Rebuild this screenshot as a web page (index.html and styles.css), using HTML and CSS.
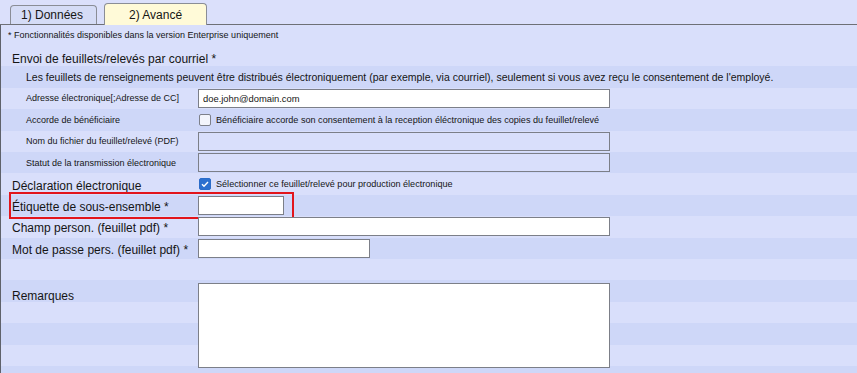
FILE: index.html
```html
<!DOCTYPE html>
<html>
<head>
    <meta name="viewport" content="width=device-width, initial-scale=1">
    <link rel="stylesheet" href="styles.css">
</head>
<body>

<div class="tabs">
    <div class="tab">1) Données</div>
    <div class="tab active">2) Avancé</div>
</div>

<div class="panel">
    <div class="note">* Fonctionnalités disponibles dans la version Enterprise uniquement</div>

    <form class="form">
        <div class="row">
            <span class="heading">Envoi de feuillets/relevés par courriel *</span>
        </div>
        <div class="row info">Les feuillets de renseignements peuvent être distribués électroniquement (par exemple, via courriel), seulement si vous avez reçu le consentement de l'employé.</div>
        <div class="row">
            <label class="lbl" for="email">Adresse électronique[;Adresse de CC]</label>
            <input class="field wide" type="text" id="email" value="doe.john@domain.com">
        </div>
        <div class="row">
            <span class="lbl">Accorde de bénéficiaire</span>
            <span class="check"></span>
            <span class="check-text">Bénéficiaire accorde son consentement à la reception éléctronique des copies du feuillet/relevé</span>
        </div>
        <div class="row">
            <span class="lbl">Nom du fichier du feuillet/relevé (PDF)</span>
            <input class="field wide" type="text" disabled>
        </div>
        <div class="row">
            <span class="lbl">Statut de la transmission électronique</span>
            <input class="field wide" type="text" disabled>
        </div>
        <div class="row">
            <span class="lbl big">Déclaration électronique</span>
            <span class="check on">
                <svg width="12" height="12" viewBox="0 0 12 12"><path d="M3 6.2 L5 8.2 L9 4" fill="none" stroke="#fff" stroke-width="1.4"/></svg>
            </span>
            <span class="check-text">Sélectionner ce feuillet/relevé pour production électronique</span>
        </div>
        <div class="row">
            <span class="lbl big">Étiquette de sous-ensemble *</span>
            <input class="field short" type="text">
            <span class="mark"></span>
        </div>
        <div class="row">
            <span class="lbl big">Champ person. (feuillet pdf) *</span>
            <input class="field wide" type="text">
        </div>
        <div class="row">
            <span class="lbl big">Mot de passe pers. (feuillet pdf) *</span>
            <input class="field mid" type="text">
        </div>
        <div class="row"></div>
        <div class="row tall">
            <span class="lbl big">Remarques</span>
            <textarea class="field wide notes"></textarea>
        </div>
    </form>
</div>

</body>
</html>
```

FILE: styles.css
```css
body {
    margin: 0;
    background-color: #dbe0fb;
    font-family: "Liberation Sans", Arial, sans-serif;
    color: #151515;
    overflow: hidden;
}

.tabs {
    display: flex;
    align-items: flex-end;
    gap: 7px;
    height: 24px;
    padding-left: 10px;
    border-bottom: 1px solid #6e7076;
}

.tab {
    height: 18px;
    padding: 0 13px 0 10px;
    border: 1px solid #8a8d96;
    border-bottom: none;
    border-radius: 4px 4px 0 0;
    background-color: #d5dcf6;
    font-size: 12px;
    line-height: 19px;
}

.tab.active {
    height: 21px;
    margin-bottom: -1px;
    padding: 0 22px;
    width: 57px;
    background-color: #fffad8;
    line-height: 22px;
    text-align: center;
}

.panel {
    border-left: 1px solid #5f626b;
    height: 348px;
}

.note {
    height: 20px;
    line-height: 20px;
    padding-left: 7px;
    font-size: 9px;
    background-color: #d9dffb;
}

.form {
    margin: 0;
    background: repeating-linear-gradient(#d9dffb 0 21.4px, #ced7f8 21.4px 42.8px);
    height: 328px;
}

.row {
    position: relative;
    display: flex;
    align-items: center;
    height: 21.4px;
}

.heading {
    padding: 6px 0 0 11px;
    font-size: 12px;
}

.info {
    padding-left: 25px;
    font-size: 10.5px;
}

.lbl {
    width: 197px;
    flex-shrink: 0;
    box-sizing: border-box;
    padding-left: 25px;
    font-size: 9px;
}

.lbl.big {
    padding: 3px 0 0 11px;
    font-size: 12px;
}

.field {
    box-sizing: border-box;
    height: 19px;
    margin: 0;
    padding: 0 4px;
    border: 1px solid #7c7f88;
    background-color: #fff;
    font-family: "Liberation Sans", Arial, sans-serif;
    font-size: 9.4px;
    color: #151515;
}

.field:disabled {
    background-color: #d9dffb;
}

.wide {
    width: 412px;
}

.short {
    width: 86px;
}

.mid {
    width: 172px;
}

.row.tall {
    align-items: flex-start;
    height: 85.6px;
}

.row.tall .lbl {
    line-height: 27px;
}

.notes {
    height: 85px;
    margin-top: 3px;
    resize: none;
}

.check {
    box-sizing: border-box;
    width: 12px;
    height: 12px;
    margin-left: 1px;
    border: 1px solid #7d808a;
    border-radius: 2px;
    background-color: #f3f5fc;
    display: flex;
}

.check.on {
    border-color: #2a6cc9;
    background-color: #2c70cf;
}

.check.on svg {
    margin: -1px;
}

.check-text {
    padding-left: 5px;
    font-size: 9.1px;
}

.mark {
    position: absolute;
    left: 8px;
    top: -3px;
    width: 285px;
    height: 27px;
    box-sizing: border-box;
    border: 2px solid #e2151c;
}
```
